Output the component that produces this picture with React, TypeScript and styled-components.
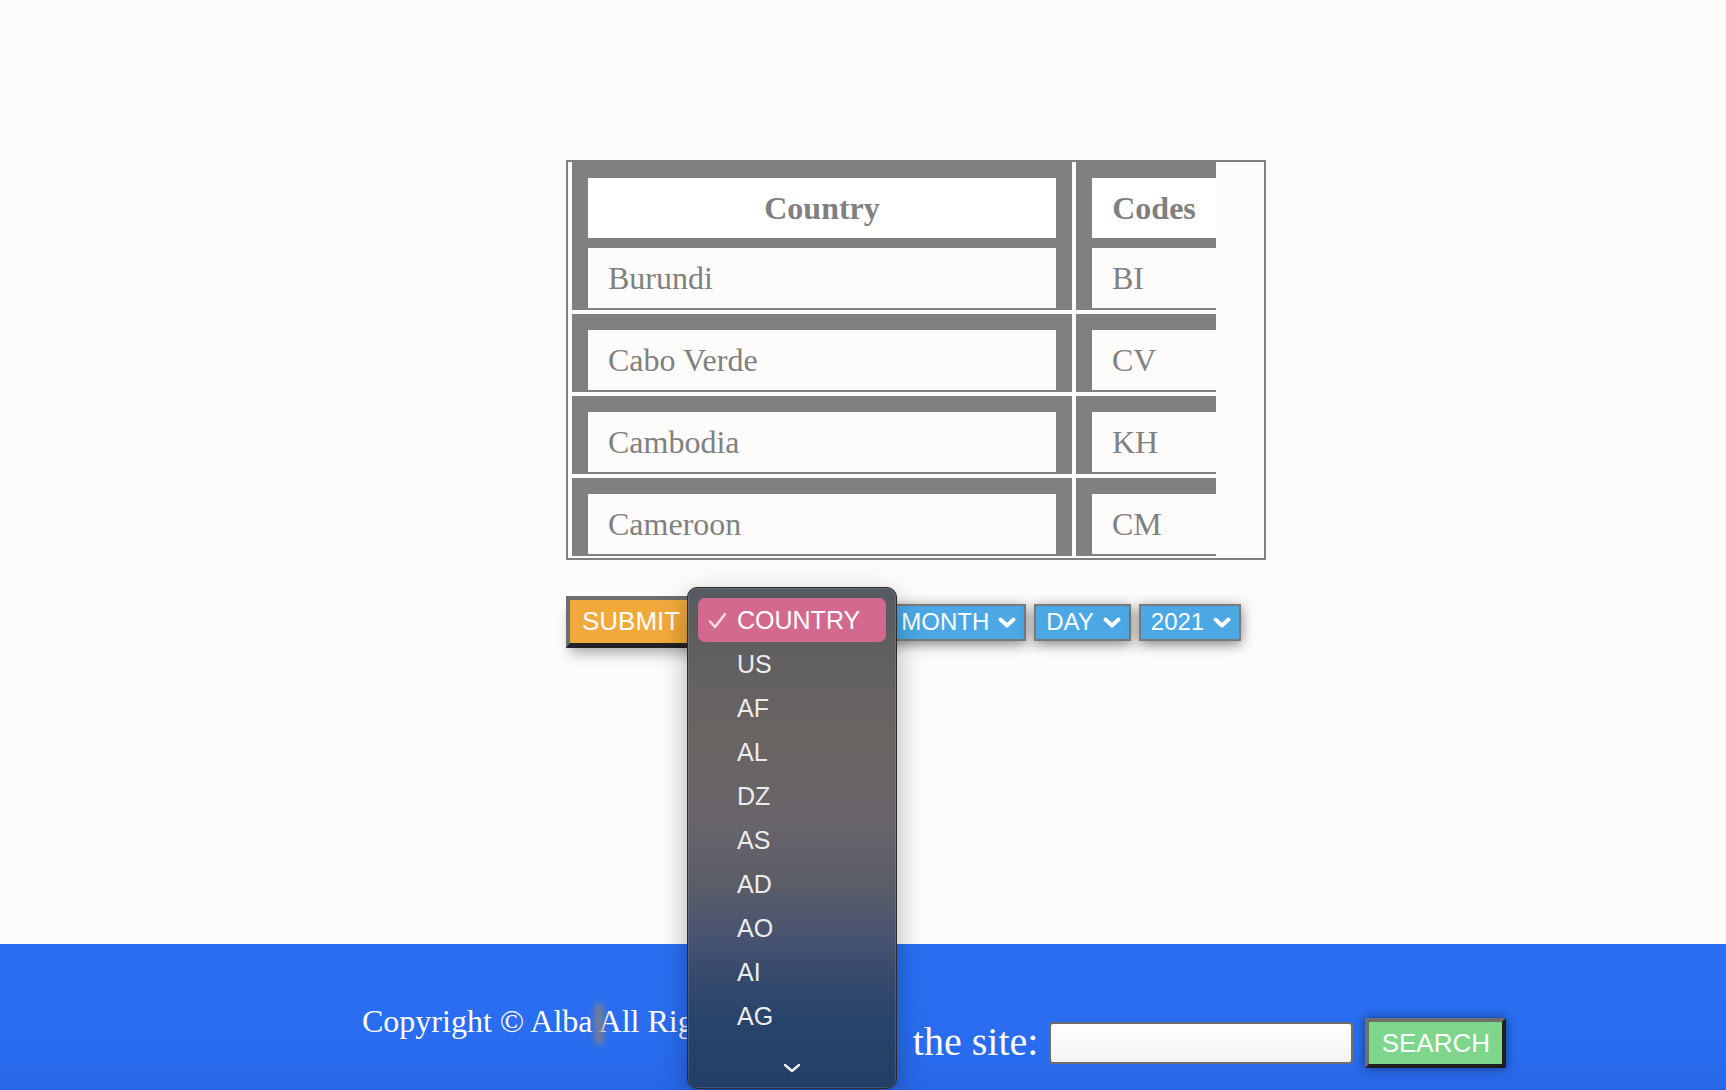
import styled, { createGlobalStyle } from "styled-components";

const countries = [
  { name: "Cabo Verde", code: "CV" },
  { name: "Cambodia", code: "KH" },
  { name: "Cameroon", code: "CM" },
];

const menuCodes = ["US", "AF", "AL", "DZ", "AS", "AD", "AO", "AI", "AG"];

const Chevron = () => (
  <svg width="18" height="11" viewBox="0 0 18 11">
    <polyline
      points="2.5,2.5 9,8.5 15.5,2.5"
      fill="none"
      stroke="#fff"
      strokeWidth="3.8"
      strokeLinecap="round"
      strokeLinejoin="round"
    />
  </svg>
);

const App = () => {
  return (
    <Page>
      <GlobalStyle />
      <Main>
        <TableBox>
          <Row>
            <Cell $head $top={16} $wide>
              Country
            </Cell>
            <Cell $head $top={16}>
              Codes
            </Cell>
          </Row>
          <Row>
            <Cell $top={10} $wide>
              Burundi
            </Cell>
            <Cell $top={10}>BI</Cell>
          </Row>
          {countries.map((c) => (
            <Row key={c.code} $spaced>
              <Cell $top={16} $wide>
                {c.name}
              </Cell>
              <Cell $top={16}>{c.code}</Cell>
            </Row>
          ))}
        </TableBox>

        <Controls>
          <SubmitButton>SUBMIT</SubmitButton>
          <Select>
            COUNTRY <Chevron />
          </Select>
          <Select>
            MONTH <Chevron />
          </Select>
          <Select>
            DAY <Chevron />
          </Select>
          <Select>
            2021 <Chevron />
          </Select>

          <Popup>
            <MenuItem $selected>
              <CheckSlot>
                <svg width="19" height="19" viewBox="0 0 19 19">
                  <polyline
                    points="2,10.5 7,16 17,3"
                    fill="none"
                    stroke="#f6dde6"
                    strokeWidth="2.5"
                    strokeLinecap="round"
                    strokeLinejoin="round"
                  />
                </svg>
              </CheckSlot>
              COUNTRY
            </MenuItem>
            {menuCodes.map((code) => (
              <MenuItem key={code}>
                <CheckSlot />
                {code}
              </MenuItem>
            ))}
            <ScrollArrow>
              <svg width="18" height="10" viewBox="0 0 18 10">
                <polyline
                  points="2,2 9,8 16,2"
                  fill="none"
                  stroke="#f0f0f0"
                  strokeWidth="2.4"
                  strokeLinecap="round"
                  strokeLinejoin="round"
                />
              </svg>
            </ScrollArrow>
          </Popup>
        </Controls>
      </Main>

      <Footer>
        <Copyright>
          Copyright © Alba <Smudge />
          All Rights
        </Copyright>
        <SearchForm>
          <SearchLabel>
            <HiddenWord>Search</HiddenWord> the site:
          </SearchLabel>
          <SearchInput type="text" />
          <SearchButton>SEARCH</SearchButton>
        </SearchForm>
      </Footer>
    </Page>
  );
};

const GlobalStyle = createGlobalStyle`
  html, body {
    margin: 0;
    padding: 0;
    background: #fdfcfb;
  }
  * {
    box-sizing: border-box;
  }
`;

const Page = styled.div`
  display: flex;
  flex-direction: column;
  min-height: 100vh;
  overflow: hidden;
`;

const Main = styled.div`
  height: 944px;
  padding: 160px 0 0 566px;
`;

const TableBox = styled.div`
  width: 700px;
  border: 2px solid #808080;
  padding: 0 0 2px 4px;
`;

const Row = styled.div<{ $spaced?: boolean }>`
  display: flex;
  gap: 4px;
  margin-top: ${(p) => (p.$spaced ? 4 : 0)}px;
`;

const Cell = styled.div<{ $head?: boolean; $top: number; $wide?: boolean }>`
  width: ${(p) => (p.$wide ? 500 : 140)}px;
  height: ${(p) => p.$top + 60 + (p.$head ? 0 : 2)}px;
  border: 16px solid #808080;
  border-top-width: ${(p) => p.$top}px;
  border-bottom-width: ${(p) => (p.$head ? 0 : 2)}px;
  border-right-width: ${(p) => (p.$wide ? 16 : 0)}px;
  background: ${(p) => (p.$head ? "#ffffff" : "#fdfcfb")};
  color: #808080;
  font-family: "Liberation Serif", "Times New Roman", serif;
  font-size: 32px;
  font-weight: ${(p) => (p.$head ? 700 : 400)};
  line-height: 60px;
  text-align: ${(p) => (p.$head ? "center" : "left")};
  padding: 0 20px;
  white-space: nowrap;
`;

const Controls = styled.div`
  position: relative;
  display: flex;
  align-items: center;
  gap: 8px;
  margin-top: 36px;
  font-family: "Liberation Sans", Arial, sans-serif;
`;

const SubmitButton = styled.button`
  width: 140px;
  height: 52px;
  padding: 0 0 0 12px;
  text-align: left;
  background: #f2a93b;
  color: #fff;
  font-family: "Liberation Sans", Arial, sans-serif;
  font-size: 26px;
  border-style: solid;
  border-width: 4px 5px 5px 4px;
  border-color: #6e6e6e #222 #222 #6e6e6e;
  box-shadow: 0 10px 12px -4px rgba(0, 0, 0, 0.3);
`;

const Select = styled.div`
  display: flex;
  align-items: center;
  gap: 9px;
  height: 37px;
  padding: 0 8px 0 10px;
  background: #4ba8e4;
  border: 2px solid #7a7a7a;
  color: #fff;
  font-size: 24px;
  box-shadow: 0 3px 13px rgba(0, 0, 0, 0.5);
  white-space: nowrap;
`;

const Popup = styled.div`
  position: absolute;
  left: 121px;
  top: -9px;
  width: 210px;
  height: 502px;
  padding: 10px 10px 0;
  border: 1px solid #2b2b2b;
  border-radius: 10px;
  background: linear-gradient(
    180deg,
    #555a61 0%,
    #605f60 12%,
    #6a6462 30%,
    #67636a 48%,
    #5a5d68 60%,
    #475370 70%,
    #35496c 78%,
    #27436a 88%,
    #223f67 100%
  );
  box-shadow: 0 10px 28px rgba(0, 0, 0, 0.3), inset 0 0 0 1px rgba(255, 255, 255, 0.12);
`;

const MenuItem = styled.div<{ $selected?: boolean }>`
  display: flex;
  align-items: center;
  gap: 10px;
  height: 44px;
  padding-left: 10px;
  border-radius: 7px;
  background: ${(p) => (p.$selected ? "#d3698f" : "transparent")};
  color: ${(p) => (p.$selected ? "#ffffff" : "#ececec")};
  font-size: 25px;
`;

const CheckSlot = styled.span`
  display: flex;
  width: 19px;
  height: 19px;
`;

const ScrollArrow = styled.div`
  display: flex;
  justify-content: center;
  padding-top: 25px;
`;

const Footer = styled.footer`
  flex: 1;
  display: flex;
  align-items: flex-start;
  min-height: 146px;
  padding-left: 362px;
  background: linear-gradient(180deg, #2a6ff3 0%, #296cf0 70%, #2767e7 100%);
  color: #fff;
`;

const Copyright = styled.p`
  width: 424px;
  margin: 59px 0 0;
  font-family: "Liberation Serif", "Times New Roman", serif;
  font-size: 32px;
  line-height: 36px;
  white-space: nowrap;
`;

const Smudge = styled.span`
  display: inline-block;
  width: 8px;
  height: 40px;
  margin: 0 -4px 0 -6px;
  vertical-align: -12px;
  background: rgba(140, 130, 120, 0.9);
  filter: blur(3px);
`;

const SearchForm = styled.div`
  display: flex;
  align-items: center;
  gap: 11px;
  margin-top: 74px;
`;

const SearchLabel = styled.span`
  margin-top: -3px;
  font-family: "Liberation Serif", "Times New Roman", serif;
  font-size: 40px;
  white-space: nowrap;
`;

const HiddenWord = styled.span`
  margin-right: 8px;
`;

const SearchInput = styled.input`
  width: 304px;
  height: 42px;
  border: 2px solid #6e6e6e;
  border-radius: 4px;
  background: linear-gradient(180deg, #ffffff 0%, #f3f3f3 100%);
`;

const SearchButton = styled.button`
  width: 141px;
  height: 50px;
  margin-left: 1px;
  padding: 0;
  background: #7dd68b;
  color: #fff;
  font-family: "Liberation Sans", Arial, sans-serif;
  font-size: 26px;
  border-style: solid;
  border-width: 4px;
  border-color: #6f6f6f #1e1e1e #1e1e1e #6f6f6f;
  box-shadow: 0 0 10px rgba(0, 0, 0, 0.45);
`;

export default App;
